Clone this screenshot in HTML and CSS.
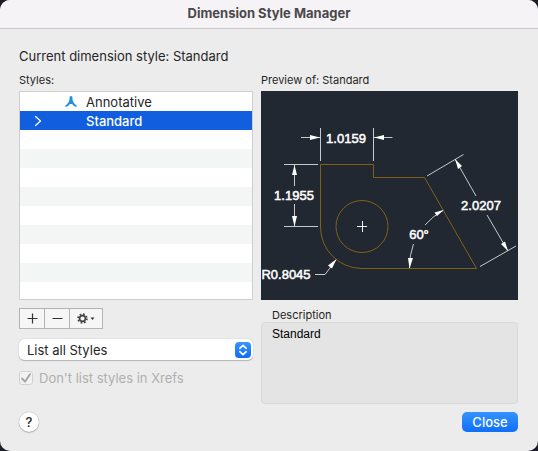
FILE: index.html
```html
<!DOCTYPE html>
<html lang="en">
<head>
<meta charset="utf-8">
<title>Dimension Style Manager</title>
<link rel="stylesheet" href="styles.css">
</head>
<body>
<main class="dialog">
  <header class="titlebar"><h1>Dimension Style Manager</h1></header>
  <div class="content">
    <p class="current">Current dimension style: Standard</p>
    <div class="columns">
      <section class="column">
        <h2 class="label" id="styles-label">Styles:</h2>
        <ul class="list" role="tree" aria-labelledby="styles-label">
          <li class="row" role="treeitem">
            <span class="disclosure"></span>
            <svg class="mark" viewBox="0 0 12 12"><path d="M4.800 .3H7.200L7.700 4.500C8.500 7 10 8.500 11.700 9.500V11C9.500 10.600 8 9.500 7.200 8H4.800C4 9.500 2.500 10.600.3 11V9.500C2 8.500 3.500 7 4.300 4.500Z" fill="#1e8fe1"/></svg>
            <span>Annotative</span>
          </li>
          <li class="row selected" role="treeitem" aria-selected="true">
            <svg class="disclosure" viewBox="0 0 8 12"><path d="M1.500 1.500L6.500 6L1.500 10.500" fill="none" stroke="#fff" stroke-width="1.300" stroke-linecap="round" stroke-linejoin="round"/></svg>
            <span class="mark"></span>
            <span>Standard</span>
          </li>
        </ul>
        <div class="tools">
          <button class="tool" type="button" aria-label="Add"><svg width="11" height="11" viewBox="0 0 11 11"><path d="M5.500 .5V10.500M.5 5.500H10.500" stroke="#333" stroke-width="1.200"/></svg></button>
          <button class="tool" type="button" aria-label="Remove"><svg width="11" height="11" viewBox="0 0 11 11"><path d="M.5 5.500H10.500" stroke="#333" stroke-width="1.200"/></svg></button>
          <button class="tool wide" type="button" aria-label="Options"><svg width="18" height="11" viewBox="0 0 18 11"><circle cx="5.500" cy="5.500" r="4.400" fill="none" stroke="#444" stroke-width="1.700" stroke-dasharray="1.728"/><circle cx="5.500" cy="5.500" r="2.900" fill="none" stroke="#444" stroke-width="1.600"/><path d="M13.500 4.500H17.500L15.500 7Z" fill="#333"/></svg></button>
        </div>
        <div class="popup">
          <select aria-label="Filter styles"><option>List all Styles</option></select>
          <svg class="stepper" viewBox="0 0 16 16"><path d="M4.800 6.300L8 3.300L11.200 6.300M4.800 9.700L8 12.700L11.200 9.700" fill="none" stroke="#fff" stroke-width="1.600" stroke-linecap="round" stroke-linejoin="round"/></svg>
        </div>
        <label class="check"><input type="checkbox" checked disabled><svg class="tick" viewBox="0 0 14 14"><path d="M3 7.500L6 10.700L11 3.300" fill="none" stroke="#a3a3a3" stroke-width="1.900" stroke-linecap="round" stroke-linejoin="round"/></svg>Don't list styles in Xrefs</label>
      </section>
      <section class="column">
        <h2 class="label">Preview of: Standard</h2>
        <svg class="preview" viewBox="261 91 257 209" role="img" aria-label="Dimension preview">
          <g fill="none" stroke="#80611a">
            <path d="M320.500 227V164.500H373.500V177.500H424.500L476.500 268.500H362A41.500 41.500 0 0 1 320.500 227"/>
            <circle cx="362" cy="226.500" r="26"/>
          </g>
          <g fill="none" stroke="#c6c9cc">
            <path d="M320.500 128V161M373.500 128V161M301 137.500H320M374 137.500H392.500"/>
            <path d="M284 164.500H318M284 226.500H318M294.500 165V186M294.500 204V226"/>
            <path d="M357 226.500H367M362.500 221V232" stroke="#f0f0f0"/>
            <path d="M315 274.500H325L336 260"/>
            <path d="M427 176L463.500 154.500M480 266.500L516 246M455 159L476 196M487 215L508 251"/>
            <path d="M443 210.500A67 67 0 0 0 425 225M413.500 244A67 67 0 0 0 409.500 268"/>
          </g>
          <g fill="#fff">
            <path d="M320 137.500L310 135V140ZM374 137.500L384 135V140ZM294.500 165L292 175H297ZM294.500 226.500L292 216H297Z"/>
            <path d="M336.500 259L332 268.500L328 265.500ZM455 159L462 166L458 169ZM508 251L501 244L505 241.500ZM443.500 210L437 216L434.500 212.500ZM409.500 268.500L408 258H413Z"/>
          </g>
          <g class="dims">
            <text x="346" y="143">1.0159</text>
            <text x="294" y="200">1.1955</text>
            <text x="481" y="210">2.0207</text>
            <text x="419" y="239">60°</text>
            <text x="286" y="279">R0.8045</text>
          </g>
        </svg>
        <label class="label inset" for="description">Description</label>
        <textarea id="description" readonly>Standard</textarea>
      </section>
    </div>
    <footer class="actions">
      <button class="help" type="button" aria-label="Help">?</button>
      <button class="close" type="button">Close</button>
    </footer>
  </div>
</main>
</body>
</html>
```
FILE: styles.css
```css
* { box-sizing: border-box; }
body {
  margin: 0;
  background: #1b1d27;
  color: #262626;
  font: 13px/16px Inter, "Liberation Sans", sans-serif;
}
h1, h2, p, ul { margin: 0; padding: 0; }
svg { display: block; }
button, select, textarea { font: inherit; margin: 0; }
.dialog {
  min-height: 100vh;
  background: #ececec;
  border-radius: 10px;
  overflow: hidden;
}
.titlebar {
  padding: 5px 0 7px;
  background: #f6f3f7;
  border-bottom: 1px solid #c9c7ca;
  text-align: center;
}
.titlebar h1 {
  font-size: 13px;
  font-weight: 700;
  line-height: 16px;
  color: #4a484b;
}
.content { padding: 19px 20px 18px 19px; }
.current { margin-bottom: 8px; }
.columns {
  display: grid;
  grid-template-columns: 234fr 257fr;
  gap: 8px;
}
.column {
  display: flex;
  flex-direction: column;
  min-width: 0;
}
.label {
  margin-bottom: 3px;
  font-size: 11px;
  font-weight: 400;
  line-height: 16px;
}
.list {
  height: 209px;
  border: 1px solid #cfcfcf;
  background: repeating-linear-gradient(#fff 0 19px, #f4f5f5 19px 38px);
  list-style: none;
  overflow: hidden;
}
.row {
  display: flex;
  align-items: center;
  height: 19px;
  padding-left: 14px;
}
.selected {
  background: #115fdf;
  color: #fff;
  font-weight: 500;
}
.disclosure { width: 8px; height: 12px; }
.mark { width: 12px; height: 12px; margin: 0 9px 0 23px; }
.tools {
  display: flex;
  align-self: flex-start;
  margin: 8px 0 10px;
  border: 1px solid #b3b3b3;
}
.tool {
  display: grid;
  place-items: center;
  width: 24px;
  height: 19px;
  padding: 0;
  border: 0;
  background: #f6f6f6;
}
.tool + .tool { width: 25px; border-left: 1px solid #b3b3b3; }
.tool.wide.wide { width: 33px; }
.popup { display: grid; align-items: center; }
.popup > * { grid-area: 1 / 1; }
.popup select {
  width: 100%;
  height: 21px;
  padding: 0 8px;
  appearance: none;
  border: 0;
  border-radius: 5px;
  background: #fff;
  color: #262626;
  box-shadow: 0 0 1px #0005, 0 1px 1px #0003;
}
.stepper {
  justify-self: end;
  width: 16px;
  height: 16px;
  margin-right: 2px;
  border-radius: 4px;
  background: linear-gradient(#3b95ff, #0f6df5);
  pointer-events: none;
}
.check {
  display: grid;
  grid-template-columns: 14px 1fr;
  gap: 6px;
  align-items: center;
  margin-top: 10px;
  color: #b0b0b0;
}
.check input {
  grid-area: 1 / 1;
  width: 14px;
  height: 14px;
  margin: 0;
  appearance: none;
  border: 1px solid #d2d2d2;
  border-radius: 3px;
  background: #f2f2f2;
}
.tick { grid-area: 1 / 1; width: 14px; height: 14px; }
.preview {
  width: 100%;
  background: #222831;
}
.dims {
  fill: #fff;
  stroke: #fff;
  stroke-width: 0.5px;
  font: 13px "Liberation Sans", sans-serif;
  text-anchor: middle;
}
.inset { margin: 7px 0 -1px 11px; }
textarea {
  height: 82px;
  padding: 3px 10px;
  border: 1px solid #d9d9d9;
  border-radius: 4px;
  background: #e4e4e4;
  color: #000;
  font: 12px/16px "Liberation Sans", sans-serif;
  resize: none;
}
.actions {
  display: flex;
  justify-content: space-between;
  margin-top: 8px;
}
.help {
  width: 20px;
  height: 20px;
  padding: 0;
  border: 0;
  border-radius: 50%;
  background: #fff;
  box-shadow: 0 0 1px #0006, 0 1px 1px #0003;
  color: #262626;
  font-weight: 500;
}
.close {
  width: 56px;
  height: 20px;
  padding: 0;
  border: 0;
  border-radius: 5px;
  background: linear-gradient(#3493ff, #0f6ffa);
  color: #fff;
  font-weight: 500;
}
```
